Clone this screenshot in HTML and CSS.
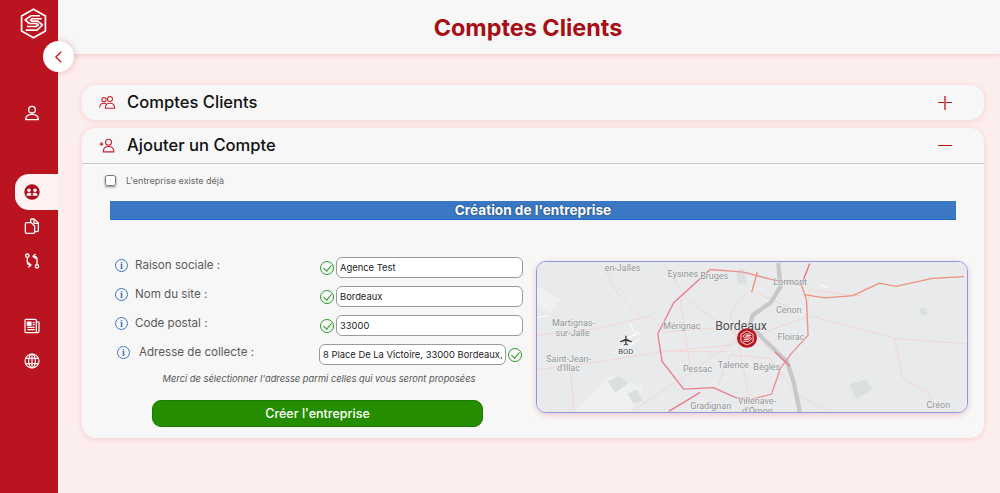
FILE: index.html
```html
<!DOCTYPE html>
<html lang="fr">

<head>
    <meta charset="UTF-8">
    <meta name="viewport" content="width=device-width, initial-scale=1.0">
    <title>Comptes Clients</title>
    <link rel="stylesheet" href="styles.css">
</head>

<body>
    <svg class="defs" width="0" height="0">
        <symbol id="logo" viewBox="0 0 48 52">
            <path d="M24 2 44 13.500V38.500L24 50 4 38.500V13.500Z" fill="none" stroke="currentColor" stroke-width="2.800" stroke-linejoin="round" />
            <path d="M35 13H20L10 20 17 26H29L32 28.500 28 31H13M38 18H22L19 20.500 21 22H31L39 28.500 30 37H11" fill="none" stroke="currentColor" stroke-width="2.800" stroke-linejoin="round" />
        </symbol>
    </svg>

    <aside class="sidebar">
        <svg class="logo"><use href="#logo" /></svg>
        <nav class="nav">
            <a class="nav-item nav-profile">
                <svg class="icon" viewBox="0 0 24 24" fill="none" stroke="currentColor" stroke-width="2">
                    <circle cx="12" cy="7" r="5" />
                    <path d="M2.500 22c0-5.500 3.500-8 9.500-8s9.500 2.500 9.500 8Z" />
                </svg>
            </a>
            <a class="nav-item nav-active">
                <svg class="icon" viewBox="0 0 24 24">
                    <circle cx="12" cy="12" r="11.500" fill="#a80f1c" />
                    <circle cx="7.500" cy="9.500" r="2.700" fill="#fdf1f1" />
                    <circle cx="16.500" cy="9.500" r="2.700" fill="#fdf1f1" />
                    <path d="M3.500 16c.5-2 2-3 4-3s3 .7 3.500 2v2.500H4.500ZM13 15c.5-1.300 1.500-2 3.500-2s3.500 1 4 3l-1 1.500H13Z" fill="#fdf1f1" />
                </svg>
            </a>
            <a class="nav-item nav-docs">
                <svg class="icon" viewBox="0 0 24 24" fill="none" stroke="currentColor" stroke-width="1.900" stroke-linejoin="round">
                    <path d="M10 6V3a1.500 1.500 0 0 1 1.500-1.500H15l6.500 6v11a2 2 0 0 1-2 2H16" />
                    <path d="M15 2v6h6.500" />
                    <path d="M4 7h7l5 5v9a2 2 0 0 1-2 2H4a2 2 0 0 1-2-2V9a2 2 0 0 1 2-2Z" />
                </svg>
            </a>
            <a class="nav-item">
                <svg class="icon" viewBox="0 0 24 24" fill="none" stroke="currentColor" stroke-width="2" stroke-linecap="round" stroke-linejoin="round">
                    <circle cx="5" cy="4" r="2.500" />
                    <circle cx="19.500" cy="20" r="2.500" />
                    <path d="M5 7v7c0 3 2 4 5 4M7 15l3.500 3L7 21M19.500 17v-8c0-3-2-4-5-4M17 2l-3.500 3L17 8" />
                </svg>
            </a>
            <a class="nav-item nav-news">
                <svg class="icon" viewBox="0 0 24 24" fill="none" stroke="currentColor" stroke-width="1.800" stroke-linejoin="round">
                    <rect x="1.500" y="2" width="17" height="20" rx="1.500" />
                    <path d="M18.500 6h4v14a2 2 0 0 1-2 2h-3" />
                    <rect x="5" y="6" width="5.500" height="5" fill="currentColor" />
                    <path d="M13 7h3M13 10h3M5 14h11M5 17.500h11" />
                </svg>
            </a>
            <a class="nav-item">
                <svg class="icon" viewBox="0 0 24 24" fill="none" stroke="currentColor" stroke-width="1.700">
                    <circle cx="12" cy="12" r="10.500" />
                    <ellipse cx="12" cy="12" rx="5" ry="10.500" />
                    <path d="M2.500 8h19M2.500 16h19M12 1.500v21" />
                </svg>
            </a>
        </nav>
    </aside>

    <button class="collapse" type="button">
        <svg viewBox="0 0 12 16" fill="none" stroke="currentColor" stroke-width="1.500">
            <path d="M9 2 3 8l6 6" />
        </svg>
    </button>

    <main class="main">
        <header class="topbar">
            <h1>Comptes Clients</h1>
        </header>

        <div class="content">
            <section class="card">
                <div class="card-head">
                    <svg class="head-icon" viewBox="0 0 24 20" fill="none" stroke="currentColor" stroke-width="1.500">
                        <circle cx="7" cy="6" r="3" />
                        <circle cx="15.500" cy="5" r="3.500" />
                        <path d="M1 17c0-4 2-6 6-6 1 0 2 .2 3 .6M9 18c0-5 2.500-7 6.500-7s6.500 2 6.500 7Z" />
                    </svg>
                    <h2>Comptes Clients</h2>
                    <span class="toggle toggle-plus"></span>
                </div>
            </section>

            <section class="card card-open">
                <div class="card-head card-head-open">
                    <svg class="head-icon" viewBox="0 0 24 20" fill="none" stroke="currentColor" stroke-width="1.500">
                        <path d="M1 8h5M3.500 5.500v5" stroke-width="1.800" />
                        <circle cx="13.500" cy="5.500" r="4.200" />
                        <path d="M6 19c0-5 3-7.500 7.500-7.500S21 14 21 19Z" />
                    </svg>
                    <h2>Ajouter un Compte</h2>
                    <span class="toggle"></span>
                </div>

                <label class="exists">
                    <input type="checkbox">
                    <span>L'entreprise existe déjà</span>
                </label>

                <h3 class="band">Création de l'entreprise</h3>

                <div class="form-map">
                    <form class="form">
                        <div class="row">
                            <div class="row-label"><span class="info">i</span>Raison sociale :</div>
                            <div class="row-field"><span class="check"></span><input type="text" value="Agence Test"></div>
                        </div>
                        <div class="row">
                            <div class="row-label"><span class="info">i</span>Nom du site :</div>
                            <div class="row-field"><span class="check"></span><input type="text" value="Bordeaux"></div>
                        </div>
                        <div class="row">
                            <div class="row-label"><span class="info">i</span>Code postal :</div>
                            <div class="row-field"><span class="check"></span><input type="text" value="33000"></div>
                        </div>
                        <div class="row row-address">
                            <div class="row-label"><span class="info">i</span>Adresse de collecte :</div>
                            <div class="row-field"><input type="text" value="8 Place De La Victoire, 33000 Bordeaux, France"><span class="check"></span></div>
                        </div>
                        <p class="hint">Merci de sélectionner l'adresse parmi celles qui vous seront proposées</p>
                        <button class="submit" type="button">Créer l'entreprise</button>
                    </form>

                    <div class="map">
                        <svg viewBox="18 15 1296 460" preserveAspectRatio="none">
                            <rect x="18" y="15" width="1296" height="460" fill="#e9eaeb" />
                            <path d="M18 90 90 130 60 170 18 150ZM130 475 240 360 340 400 300 475Z" fill="#eff0f0" />
                            <path d="M1170 160q20-15 25 10l-5 10q-20 0-20-20ZM620 45q15-20 25 0l5 35q-20 10-30-10ZM230 380l35-15 30 20-40 30ZM290 420l30-15 15 35-25 10ZM960 390l50-15 20 30-50 30Z" fill="#dcdfe0" />

                            <g fill="none" stroke="#f3d5d2" stroke-width="3">
                                <path d="M18 345 210 320 400 290 600 270 650 250 840 180 1100 250 1310 265" />
                                <path d="M18 240 200 220 360 180 400 230 650 210" />
                                <path d="M400 20 470 130 620 240 660 440 680 475" />
                                <path d="M650 110 600 170 620 250 500 340 300 475" />
                                <path d="M220 30 260 110 330 180" />
                                <path d="M1095 250 1120 370 1200 420 1230 475" />
                                <path d="M830 180 840 100 1000 120" />
                                <path d="M560 400 600 300 720 310 800 420 900 475" />
                                <path d="M450 130 480 340M385 290 590 290M690 250 730 300" />
                                <path d="M120 350 130 475M680 110 790 160" />
                            </g>

                            <path d="M745 18 752 90 722 140 668 178 660 208 700 250 772 322 792 385 810 475" fill="none" stroke="#c6c8ca" stroke-width="13" />
                            <path d="M540 38 640 46 730 70 815 85 830 130 835 240 785 295 752 340 725 420 650 440" fill="none" stroke="#ed8f8f" stroke-width="4" />
                            <path d="M650 440 610 428 550 400 460 405 395 320 382 235 430 140 540 38" fill="none" stroke="#ea7d8c" stroke-width="4" />
                            <path d="M415 473 510 415M735 290 780 335M815 85 840 20" fill="none" stroke="#ea7d8c" stroke-width="4.500" />
                            <path d="M665 108 682 45M825 115 885 125 970 118 1050 80 1100 90 1210 65 1305 60" fill="none" stroke="#ef9078" stroke-width="4" />
                            <path d="M18 185 55 178M872 85 895 95M250 295 325 225M270 255 330 232M290 275 330 250M300 205 315 240" fill="none" stroke="#fff" stroke-width="3" />

                            <g class="map-label">
                                <text x="222" y="42">en-Jalles</text>
                                <text x="412" y="62">Eysines</text>
                                <text x="510" y="68">Bruges</text>
                                <text x="730" y="86">Lormont</text>
                                <text x="738" y="172">Cenon</text>
                                <text x="63" y="211">Martignas-</text>
                                <text x="74" y="241">sur-Jalle</text>
                                <text x="398" y="220">Mérignac</text>
                                <text x="743" y="253">Floirac</text>
                                <text x="46" y="321">Saint-Jean-</text>
                                <text x="78" y="350">d'Illac</text>
                                <text x="458" y="352">Pessac</text>
                                <text x="563" y="341">Talence</text>
                                <text x="670" y="346">Bègles</text>
                                <text x="623" y="452">Villenave-</text>
                                <text x="480" y="467">Gradignan</text>
                                <text x="636" y="482">d'Ornon</text>
                                <text x="1192" y="464">Créon</text>
                                <text class="map-city" x="555" y="225">Bordeaux</text>
                                <text class="map-code" x="263" y="297">BOD</text>
                            </g>

                            <path d="M286 240v8l-16 8v3l16-4v9l-5 3v2l7-2 7 2v-2l-5-3v-9l16 4v-3l-16-8v-8q-2-3-4 0Z" transform="translate(-2 2)" fill="#3c4043" />

                            <circle cx="651" cy="248" r="30" fill="#bb1421" />
                            <svg class="map-pin" x="629" y="224" width="44" height="48" color="#fff"><use href="#logo" /></svg>
                        </svg>
                    </div>
                </div>
            </section>
        </div>
    </main>
</body>

</html>
```

FILE: styles.css
```css
* {
    box-sizing: border-box;
}

body {
    margin: 0;
    height: 493px;
    overflow: hidden;
    display: flex;
    background-color: #fdeeee;
    font-family: "Inter", "Liberation Sans", sans-serif;
    color: #111;
}

.defs {
    display: block;
    position: absolute;
}

/* sidebar */
.sidebar {
    width: 58px;
    flex-shrink: 0;
    background-color: #bb1421;
    color: #fff;
    padding-top: 8px;
    display: flex;
    flex-direction: column;
    align-items: flex-end;
}

.logo {
    width: 29px;
    height: 31px;
    margin-right: 10px;
    display: block;
}

.nav {
    width: 100%;
    margin-top: 56px;
    display: flex;
    flex-direction: column;
    align-items: flex-end;
}

.nav-item {
    width: 43px;
    height: 35px;
    display: flex;
    align-items: center;
    padding-left: 9px;
    color: #fff;
}

.nav-active {
    height: 36px;
    margin-top: 44px;
    background-color: #fdf1f1;
    border-radius: 14px 0 0 14px;
}

.nav-docs {
    margin-top: -2px;
}

.nav-news {
    margin-top: 30px;
}

.icon {
    width: 16px;
    height: 16px;
    display: block;
}

.collapse {
    position: absolute;
    left: 43px;
    top: 41px;
    z-index: 2;
    width: 31px;
    height: 31px;
    padding: 0;
    border: none;
    border-radius: 50%;
    background-color: #fff;
    color: #d5121e;
    box-shadow: 0 0 6px rgba(187, 20, 33, 0.3);
    display: flex;
    align-items: center;
    justify-content: center;
}

.collapse svg {
    width: 11px;
    height: 14px;
}

/* main */
.main {
    flex: 1;
    min-width: 0;
}

.topbar {
    height: 54px;
    background-color: #f7f7f7;
    box-shadow: 0 1px 5px rgba(187, 20, 33, 0.18);
    display: flex;
    align-items: center;
    justify-content: center;
    padding-right: 2px;
}

.topbar h1 {
    margin: 0;
    font-size: 23.400px;
    font-weight: 700;
    color: #a50f15;
}

.content {
    padding: 31px 16px 0 24px;
}

.card {
    background-color: #f7f7f7;
    border-radius: 14px;
    box-shadow: 0 1px 6px rgba(187, 20, 33, 0.14);
}

.card-open {
    margin-top: 8px;
    height: 310px;
}

.card-head {
    height: 35px;
    display: flex;
    align-items: center;
    padding: 0 32px 0 17px;
}

.card-head-open {
    height: 36px;
    border-bottom: 1px solid #c9c7c7;
}

.head-icon {
    width: 17px;
    height: 15px;
    color: #c9202e;
    flex-shrink: 0;
}

.card-head h2 {
    margin: -2px 0 0 11px;
    flex: 1;
    font-size: 16.600px;
    font-weight: 500;
}

.toggle {
    width: 14px;
    height: 14px;
    position: relative;
    display: block;
}

.toggle::before {
    content: "";
    position: absolute;
    left: 0;
    right: 0;
    top: 6px;
    height: 1.500px;
    background-color: #c10f1c;
}

.toggle-plus::after {
    content: "";
    position: absolute;
    top: 0;
    bottom: 0;
    left: 6px;
    width: 2px;
    background-color: #d3606a;
}

.exists {
    display: flex;
    align-items: center;
    gap: 10px;
    margin: 11px 0 0 23px;
    font-size: 9px;
    color: #666;
}

.exists input {
    width: 11px;
    height: 11px;
    margin: 0;
    box-shadow: 0 1px 2px rgba(0, 0, 0, 0.45);
}

.band {
    margin: 15px 28px 0;
    height: 19px;
    line-height: 19px;
    background-color: #3b78c4;
    border-bottom: 1px solid #1c6fc9;
    color: #fff;
    text-align: center;
    font-size: 13.600px;
    font-weight: 700;
    text-shadow: 0 0 2px rgba(0, 0, 0, 0.5);
}

.form-map {
    display: flex;
    margin-top: 37px;
    padding-left: 33px;
}

/* form */
.form {
    width: 408px;
    flex-shrink: 0;
}

.row {
    height: 21px;
    margin-bottom: 8px;
    display: flex;
    justify-content: space-between;
    align-items: center;
}

.row-label {
    display: flex;
    align-items: center;
    gap: 7px;
    margin-top: -5px;
    font-size: 11.600px;
    color: #5b5b5b;
}

.row-address .row-label {
    margin-left: 2px;
    gap: 9px;
}

.row-field {
    display: flex;
    align-items: center;
    gap: 2px;
}

.row-address .row-field {
    margin-right: 1px;
}

.row input {
    width: 187px;
    height: 21px;
    padding: 0 3px;
    border: 1px solid #9a9a9a;
    border-radius: 6px;
    background-color: #fff;
    font-family: inherit;
    font-size: 9.400px;
    color: #222;
}

.info {
    width: 13px;
    height: 13px;
    border: 1px solid #3b78c4;
    border-radius: 50%;
    color: #3b78c4;
    font-family: "Liberation Serif", serif;
    font-size: 10px;
    font-weight: 700;
    line-height: 11px;
    text-align: center;
}

.check {
    width: 14px;
    height: 14px;
    border: 1px solid #2c9a2c;
    border-radius: 50%;
    position: relative;
    display: block;
}

.check::after {
    content: "";
    position: absolute;
    left: 3.500px;
    top: 1.500px;
    width: 4px;
    height: 7px;
    border-right: 1px solid #2c9a2c;
    border-bottom: 1px solid #2c9a2c;
    transform: rotate(40deg);
}

.hint {
    margin: 8px 0 0;
    text-align: center;
    font-size: 9.300px;
    font-style: italic;
    color: #555;
}

.submit {
    display: block;
    width: 331px;
    height: 27px;
    margin: 16px 0 0 37px;
    border: 1px solid #1f7a00;
    border-radius: 9px;
    background-color: #258d00;
    color: #fff;
    font-family: inherit;
    font-size: 12.500px;
    font-weight: 500;
}

/* map */
.map {
    width: 432px;
    height: 152px;
    margin-left: 13px;
    margin-top: 4px;
    border-radius: 10px;
    overflow: hidden;
    border: 1px solid #8f96dd;
    box-shadow: 0 2px 6px rgba(187, 20, 33, 0.2);
}

.map > svg {
    display: block;
    width: 100%;
    height: 100%;
}

.map-label text {
    font-family: "Roboto", sans-serif;
    font-size: 27px;
    fill: #8e9396;
    stroke: #f4f4f4;
    stroke-width: 3px;
    paint-order: stroke;
}

.map-label .map-city {
    font-size: 37px;
    fill: #4a4e51;
}

.map-label .map-code {
    font-size: 23px;
    fill: #4a4e51;
}
```
